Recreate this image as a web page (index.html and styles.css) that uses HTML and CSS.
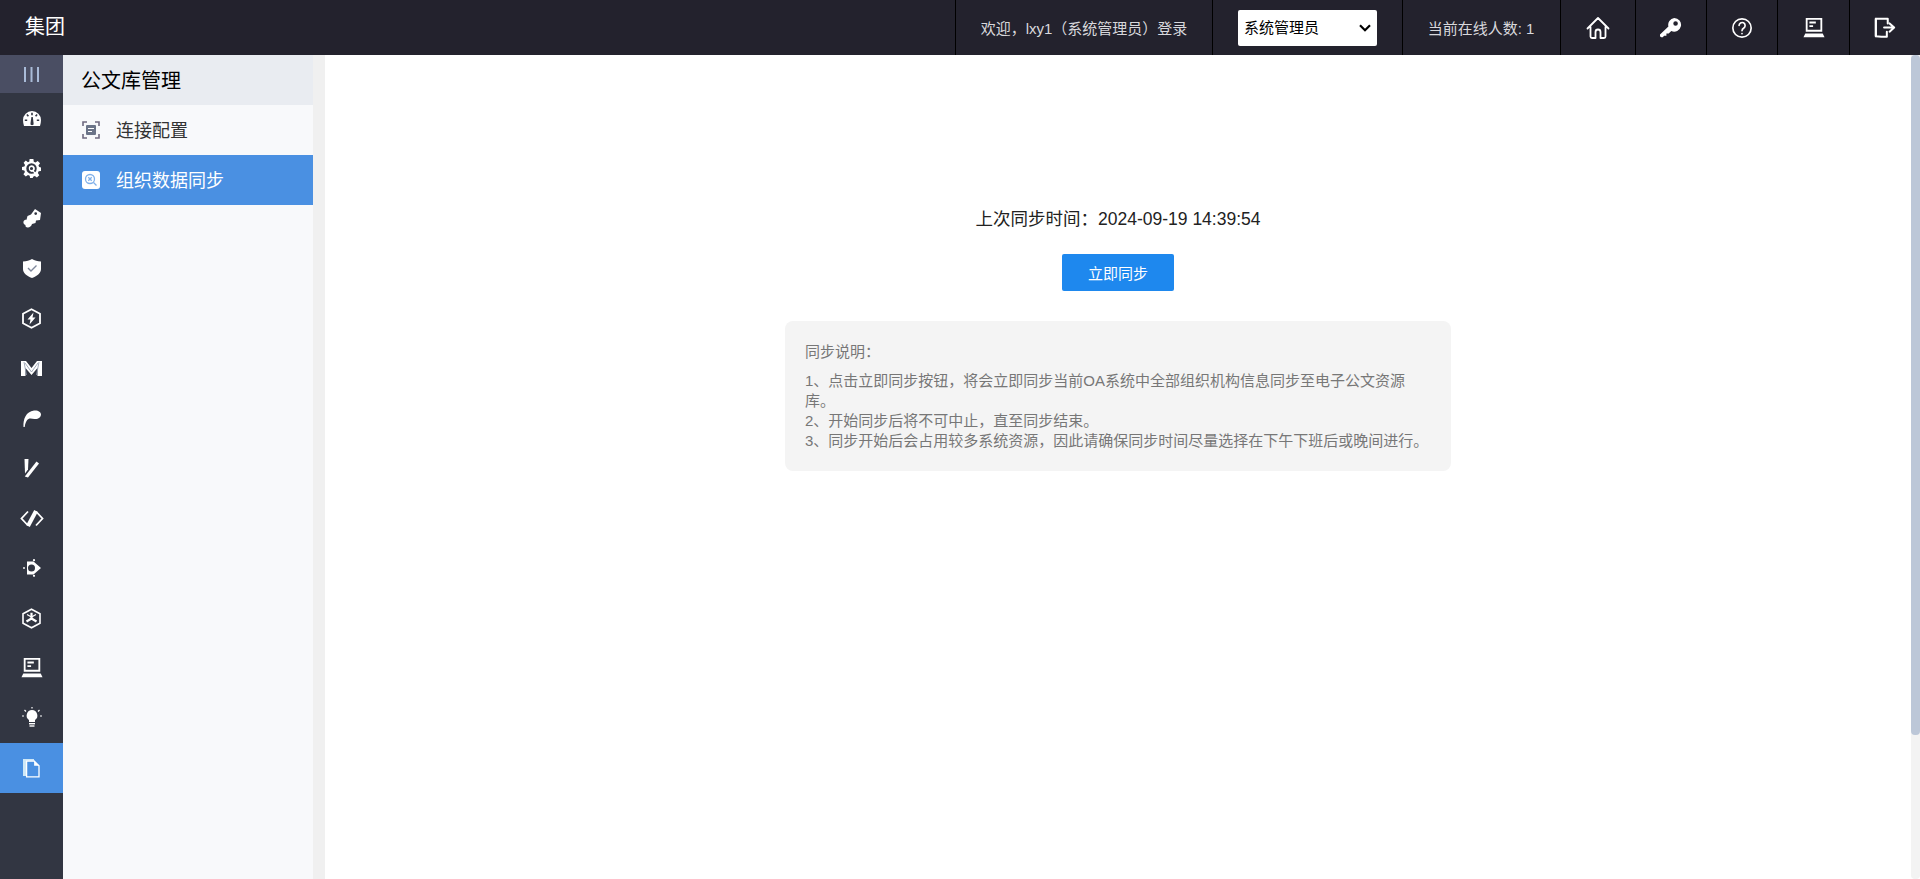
FILE: index.html
```html
<!DOCTYPE html>
<html lang="zh-CN">
<head>
<meta charset="utf-8">
<title>公文库管理</title>
<link rel="stylesheet" href="styles.css">
</head>
<body>
<header class="topbar">
  <div class="brand">集团</div>
  <div class="top-right">
    <div class="cell cell-welcome">欢迎，lxy1（系统管理员）登录</div>
    <div class="cell cell-role">
      <div class="select-wrap">
        <select class="role-select"><option>系统管理员</option></select>
        <svg class="select-arrow" viewBox="0 0 12 8" width="12" height="8" fill="none" stroke="#000" stroke-width="2.200"><path d="m1 1.200 5 5 5-5"/></svg>
      </div>
    </div>
    <div class="cell cell-online">当前在线人数: 1</div>
    <div class="cell cell-icon cell-home">
      <svg viewBox="0 0 24 24" width="24" height="24" fill="none" stroke="#fff" stroke-width="1.800" stroke-linejoin="round" stroke-linecap="round"><path d="M1.500 12.500 12 2l10.500 10.500M4.500 11v9.500a1.500 1.500 0 0 0 1.500 1.500h3.500v-6a2.500 2.500 0 0 1 5 0v6H18a1.500 1.500 0 0 0 1.500-1.500V11"/></svg>
    </div>
    <div class="cell cell-icon">
      <svg viewBox="0 0 24 24" width="22" height="22" fill="#fff"><path fill-rule="evenodd" d="M15.500 1a7.500 7.500 0 1 1-3.200 14.300L9.500 18H7v2.500H4.500L3 22H1.500C.7 22 0 21.300 0 20.500V19l9.200-8.600A7.500 7.500 0 0 1 15.500 1Zm1.500 3.500a2.500 2.500 0 1 0 0 5 2.500 2.500 0 0 0 0-5Z"/></svg>
    </div>
    <div class="cell cell-icon">
      <svg viewBox="0 0 24 24" width="22" height="22" fill="none" stroke="#fff" stroke-width="1.800" stroke-linecap="round"><circle cx="12" cy="12" r="10"/><path d="M8.800 9.300a3.300 3.300 0 1 1 5.200 2.700c-1.300.9-2 1.500-2 3"/><path d="M12 18v.2"/></svg>
    </div>
    <div class="cell cell-icon cell-laptop">
      <svg viewBox="0 0 24 24" width="22" height="22" fill="#fff"><path fill-rule="evenodd" d="M3 1h18v15H3V1Zm2 2v11h14V3H5Zm2 2h7v2H7V5Zm0 4h4v2H7V9ZM2.500 18h19l2 4H.5l2-4Z"/></svg>
    </div>
    <div class="cell cell-icon">
      <svg viewBox="0 0 24 24" width="22" height="22" fill="none" stroke="#fff" stroke-width="2.200" stroke-linejoin="round" stroke-linecap="round"><path d="M15 7V2H2v19l6 .5h6V16"/><path d="M2 2v19"/><path d="M11 11.500h10M17 7l5 4.500-5 4.500"/></svg>
    </div>
  </div>
</header>
<div class="shell">
  <nav class="rail">
    <div class="rail-toggle">
      <svg viewBox="0 0 15 15" width="15" height="15" fill="#a9bbd8"><rect width="2" height="15"/><rect x="6.500" width="2" height="15"/><rect x="13" width="2" height="15"/></svg>
    </div>
    <div class="rail-item">
      <svg viewBox="0 0 18 15" width="18" height="15" fill="#fff"><path fill-rule="evenodd" d="M9 0a9 9 0 0 0-9 9c0 2 .4 4 1 6h16c.6-2 1-4 1-6a9 9 0 0 0-9-9ZM8.200 1.800h1.600v2.400H8.200V1.800ZM3.300 4l1.200-1 1.500 1.800-1.200 1L3.300 4Zm10.200-1 1.200 1-1.500 1.800-1.200-1L13.500 3ZM1.800 8.500h2.400v1.600H1.800V8.500Zm12 0h2.400v1.600h-2.400V8.500ZM8.400 6h1.400l.8 6.300a1.600 1.600 0 1 1-3.100 0L8.400 6Z"/></svg>
    </div>
    <div class="rail-item">
      <svg viewBox="0 0 20 20" width="19" height="19" fill="#fff"><path fill-rule="evenodd" d="M8 0h4l.4 2.800 1.800.8L16.500 2l2.500 2.500-1.700 2.300.8 1.700L20 9v3.500l-2.500.5-.8 1.800 1.500 2.200-2.500 2.500-2.200-1.600-1.800.7L11.300 20H8.500l-.4-2.400-1.800-.8L4 18.500 1.500 16l1.600-2.300-.7-1.700L0 11.500V8.300l2.500-.4.700-1.700L1.700 4 4 1.700l2.300 1.600 1.400-.7L8 0Zm2 4.500a5.500 5.500 0 1 0 0 11 5.500 5.500 0 0 0 0-11Z"/><path fill-rule="evenodd" d="M10 6.500a3.500 3.500 0 0 1 2.500 6l3 3-1 1-3-3A3.500 3.500 0 1 1 10 6.500Zm0 1.800a1.700 1.700 0 1 0 0 3.400 1.700 1.700 0 0 0 0-3.400Z"/></svg>
    </div>
    <div class="rail-item">
      <svg viewBox="0 0 18 19" width="18" height="19" fill="#fff"><path fill-rule="evenodd" d="M12 0l6 4-1 7-4 .5-.5 2.500-3.500 1c-.5 2-2.500 3.500-4 3.500-1.500.3-3-1-2.500-2.500C1 15.500 0 14 .5 12.500c.4-1.500 2-2 3-1.700l1-3.800L8 5.500 12 0Zm.7 3.200a1.400 1.400 0 1 0 0 2.800 1.400 1.400 0 0 0 0-2.800Z"/></svg>
    </div>
    <div class="rail-item">
      <svg viewBox="0 0 18 19" width="18" height="19"><path fill="#fff" d="M9 0c2.500 1.500 5.500 2.300 9 2.500V10c0 4-3.500 7-9 9-5.500-2-9-5-9-9V2.500C3.500 2.300 6.500 1.500 9 0Z"/><path fill="none" stroke="#7f889c" stroke-width="1.400" d="m5 9 3 3 5.500-5.500"/></svg>
    </div>
    <div class="rail-item">
      <svg viewBox="0 0 19 21" width="19" height="21"><path fill="none" stroke="#fff" stroke-width="1.800" d="M9.500 1.200 18 5.800v9.400l-8.500 4.600L1 15.200V5.800l8.500-4.600Z"/><path fill="#fff" d="M11.500 4.500 5.500 11.500h3l-1 5 6-7h-3l1-5Z"/></svg>
    </div>
    <div class="rail-item">
      <svg viewBox="0 0 21 15" width="21" height="15"><path fill="#fff" d="M0 0h5l5.500 7L16 0h5v15h-4.500V7L10.500 14 4.500 7v8H0V0Z"/><path fill="none" stroke="#8c95a8" stroke-width=".8" d="M3 1l2.500 13M18 1l-2.500 13M4 2l6.500 9L17 2"/></svg>
    </div>
    <div class="rail-item">
      <svg viewBox="0 0 18 17" width="18" height="17" fill="#fff"><path d="M.5 17C0 9 3 1.500 11 .5 15 0 18 2 18 4.500 18 7 15 9.500 11.500 9 9 8.700 7 8.300 5.500 9 3.500 10 2.200 13 1.700 17H.5Z"/></svg>
    </div>
    <div class="rail-item">
      <svg viewBox="0 0 15 19" width="15" height="19" fill="#fff"><path d="M.5 0H4.500L4 10.500 1 14.500.5 0Z"/><path d="M12.500 2.500 15 4.500 4 18.500.8 17.500 12.500 2.500Z"/></svg>
    </div>
    <div class="rail-item">
      <svg viewBox="0 0 24 17" width="24" height="17" fill="none" stroke="#fff"><path stroke-width="1.800" d="M8 1.500 1.500 8.500 8 15.500"/><path stroke-width="1.800" d="M16 1.500 22.500 8.500 16 15.500"/><path stroke-width="4" d="M16 1 8 16"/></svg>
    </div>
    <div class="rail-item">
      <svg viewBox="0 0 18 18" width="18" height="18" fill="#fff"><path fill-rule="evenodd" d="M4 2.500h6.500L18 9l-7.500 6.500H4v-13Zm4.500 3a3.500 3.500 0 1 0 0 7 3.500 3.500 0 0 0 0-7Z"/><rect y="8.300" width="2" height="1.400"/><circle cx="11" cy="1.200" r="1.100"/><circle cx="11" cy="16.800" r="1.100"/></svg>
    </div>
    <div class="rail-item">
      <svg viewBox="0 0 19 21" width="19" height="21" fill="none" stroke="#fff" stroke-width="1.600"><path d="M9.500 1.200 18 5.800v9.400l-8.500 4.600L1 15.200V5.800l8.500-4.600Z"/><path stroke-width="2.200" d="M9.500 10.500V4.800M9.500 10.500l-5 3M9.500 10.500l5 3"/><path stroke-width="1.200" d="M5 6.500l4.500 2.500L14 6.500"/></svg>
    </div>
    <div class="rail-item">
      <svg viewBox="0 0 24 24" width="22" height="22" fill="#fff"><path fill-rule="evenodd" d="M3 1h18v15H3V1Zm2 2v11h14V3H5Zm2 2h7v2H7V5Zm0 4h4v2H7V9ZM2.500 18h19l2 4H.5l2-4Z"/></svg>
    </div>
    <div class="rail-item">
      <svg viewBox="0 0 20 22" width="20" height="22" fill="#fff"><path d="M10 3a5.500 5.500 0 0 0-3 10v2h6v-2a5.500 5.500 0 0 0-3-10Z"/><rect x="7" y="16" width="6" height="1.400"/><rect x="7.500" y="18.300" width="5" height="1.400"/><path stroke="#fff" stroke-width="1.200" d="M10 0v1.500M2.500 3 4 4.500M17.500 3 16 4.500M0 9h2M18 9h2"/></svg>
    </div>
    <div class="rail-item rail-active">
      <svg viewBox="0 0 17 19" width="17" height="19" fill="none"><path fill="#cfe8f7" d="M0 0h11v1.500H3V17H0V0Z"/><path stroke="#fff" stroke-width="1.300" d="M3.600 2h7.500L16 6.800v11H3.600V2Z"/><path fill="#fff" d="M11.100 2 16 6.800h-4.900V2Z"/></svg>
    </div>
  </nav>
  <aside class="subnav">
    <div class="subnav-title">公文库管理</div>
    <div class="subnav-item">
      <svg viewBox="0 0 18 18" width="18" height="18" fill="none"><path stroke="#6f6a80" stroke-width="1.600" d="M1 5V1h4M13 1h4v4M17 13v4h-4M5 17H1v-4"/><rect x="4" y="4" width="10" height="10" rx="1" fill="#6b7488"/><path stroke="#fff" stroke-width="1.200" d="M6 7.500h6M6 10.500h4"/></svg>
      <span>连接配置</span>
    </div>
    <div class="subnav-item subnav-active">
      <svg viewBox="0 0 18 18" width="18" height="18" fill="none"><rect width="18" height="18" rx="3" fill="#fff"/><circle cx="8" cy="8" r="4.500" stroke="#7fb0ea" stroke-width="1.300"/><path stroke="#7fb0ea" stroke-width="1.300" d="m11.500 11.500 3 3M6.300 6.300l3.400 3.400M9.700 6.300 6.300 9.700"/></svg>
      <span>组织数据同步</span>
    </div>
  </aside>
  <div class="gutter"></div>
  <main class="content">
    <p class="sync-time">上次同步时间：2024-09-19 14:39:54</p>
    <button class="sync-btn">立即同步</button>
    <section class="note">
      <p class="note-title">同步说明：</p>
      <p class="note-body">1、点击立即同步按钮，将会立即同步当前OA系统中全部组织机构信息同步至电子公文资源库。<br>2、开始同步后将不可中止，直至同步结束。<br>3、同步开始后会占用较多系统资源，因此请确保同步时间尽量选择在下午下班后或晚间进行。</p>
    </section>
  </main>
  <div class="scroll-track"><div class="scroll-thumb"></div></div>
</div>
</body>
</html>
```
FILE: styles.css
```css
* { box-sizing: border-box; }
html, body { height: 100%; }
body {
  margin: 0;
  overflow: hidden;
  display: flex;
  flex-direction: column;
  font-family: "Liberation Sans", "Noto Sans CJK SC", sans-serif;
  background: #fff;
}
svg { display: block; flex: none; }
p { margin: 0; }

.topbar {
  flex: none;
  height: 55px;
  display: flex;
  justify-content: space-between;
  background: #23222d;
  color: #fff;
}
.brand { padding-left: 25px; font-size: 20px; line-height: 55px; }
.top-right { display: flex; }
.cell {
  display: flex;
  align-items: center;
  justify-content: center;
  height: 55px;
  border-left: 1px solid #000;
  font-size: 15px;
  color: #d8d8dc;
}
.cell-welcome { width: 257px; }
.cell-role { width: 190px; }
.cell-online { width: 158px; padding-right: 1px; }
.cell-icon { width: 71px; }
.cell-home { width: 75px; }
.cell-laptop { width: 72px; }
.select-wrap { position: relative; }
.select-arrow { position: absolute; top: 14px; right: 6px; pointer-events: none; }
.role-select {
  display: block;
  width: 139px;
  height: 36px;
  padding: 0 6px;
  border: 0;
  border-radius: 2px;
  appearance: none;
  background-color: #fff;
  color: #000;
  font: 15px "Liberation Sans", "Noto Sans CJK SC", sans-serif;
}

.shell { flex: 1; min-height: 0; display: flex; }
.rail { flex: none; width: 63px; background: #323642; }
.rail-toggle {
  height: 38px;
  display: flex;
  align-items: center;
  justify-content: center;
  background: #4a4e63;
}
.rail-item {
  height: 50px;
  display: flex;
  align-items: center;
  justify-content: center;
}
.rail-active { background: #4a90e2; }

.subnav { flex: none; width: 250px; background: #f8f9fb; }
.subnav-title {
  height: 50px;
  padding-left: 18px;
  background: #e9ecf1;
  color: #000;
  font-size: 20px;
  line-height: 52px;
}
.subnav-item {
  height: 50px;
  display: flex;
  align-items: center;
  gap: 16px;
  padding-left: 19px;
  color: #333;
  font-size: 18px;
}
.subnav-item span { margin-bottom: 2px; }
.subnav-active { background: #4a90e2; color: #fff; }
.gutter { flex: none; width: 12px; background: #f0f0f0; }

.content {
  flex: 1;
  display: flex;
  flex-direction: column;
  align-items: center;
  padding-top: 151px;
}
.sync-time { color: #222; font-size: 17.5px; line-height: 26px; }
.sync-btn {
  width: 112px;
  height: 37px;
  margin-top: 22px;
  border: 0;
  border-radius: 2px;
  background: #1e88ee;
  color: #fff;
  font: 15px "Liberation Sans", "Noto Sans CJK SC", sans-serif;
}
.note {
  width: 666px;
  height: 150px;
  margin-top: 30px;
  padding: 21px 20px 20px;
  border-radius: 8px;
  background: #f4f4f4;
  color: #777;
  font-size: 15px;
  line-height: 20px;
}
.note-body { margin-top: 9px; }

.scroll-track { flex: none; width: 9px; background: #f3f3f3; border-radius: 0 0 4px 4px; }
.scroll-thumb { width: 9px; height: 680px; background: #bcc7d8; border-radius: 4px; }
```
